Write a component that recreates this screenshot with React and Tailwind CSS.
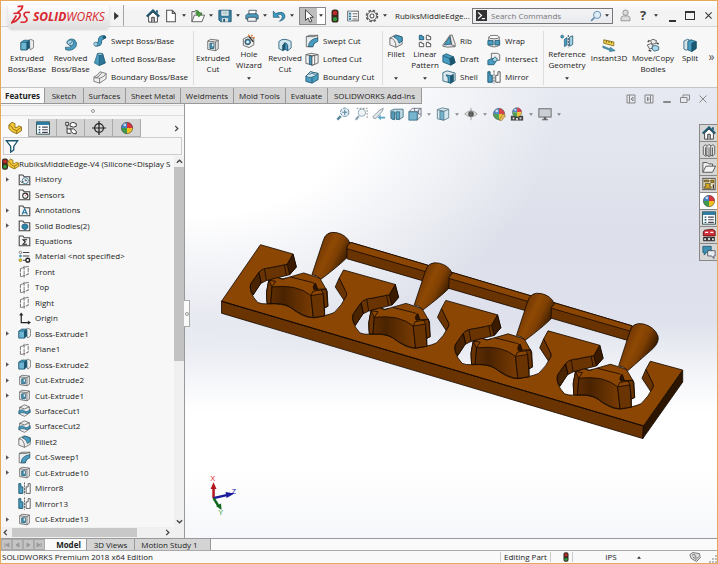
import React from "react";

const B = "#4a9cc0";
const L = "#a9d6e8";
const D = "#1c566f";
const G = "#555";

const globe = (
  <g>
    <path d="M8 8V1.5A6.5 6.5 0 0 0 1.5 8Z" fill="#3f7fc4" />
    <path d="M8 8V1.5A6.5 6.5 0 0 1 14.5 8Z" fill="#d8323a" />
    <path d="M8 8H14.5A6.5 6.5 0 0 1 8 14.500Z" fill="#f0c020" />
    <path d="M8 8H1.5A6.5 6.5 0 0 0 8 14.500Z" fill="#3f9a46" />
    <circle cx="5.500" cy="4.500" r="1.600" fill="#fff" opacity=".7" />
    <circle cx="8" cy="8" r="6.500" fill="none" stroke="#333" strokeWidth=".6" />
  </g>
);

const folder = <path d="M1.500 14.500V2.500H6L7.500 4.500H14.500V14.500Z" fill="#f4f4f4" stroke="#444" strokeWidth="1.300" />;

const art = {
  home: (
    <g>
      <path d="M3 8V15H13V8L8 3.500Z" fill="#fff" stroke="#333" />
      <path d="M.8 8.500 8 1.500 15.200 8.500" fill="none" stroke={D} strokeWidth="2.200" />
      <path d="M6.500 15V9.500H9.500V15" fill="#bbb" stroke="#333" />
      <path d="M11.500 1.500H13.500V5L11.500 3.500Z" fill={D} />
    </g>
  ),
  doc: <path d="M3 1.500H9.500L13 5V14.500H3ZM9.500 1.500V5H13" fill="#fff" stroke="#555" strokeWidth="1.200" />,
  open: (
    <g stroke="#555" strokeWidth="1">
      <path d="M1 14.500V3H5L6.500 4.500H12V7" fill="#eee" />
      <path d="M1 14.500 4 7H15.500L12.500 14.500Z" fill="#fafafa" />
      <path d="M5 1.500Q9 1 10 5H12.500L9 9 5.500 5H7.800Q7.500 3 5 1.500Z" fill="#48a83c" stroke="#26701f" strokeWidth=".7" />
    </g>
  ),
  save: (
    <g>
      <path d="M1 1.500H15V14.500H3L1 12.500Z" fill="#3c84a8" stroke={D} />
      <path d="M3.500 1.500H12.500V8H3.500Z" fill="#eef4f7" stroke={D} strokeWidth=".6" />
      <path d="M5 3.500H11M5 5.500H11" stroke="#8aa" />
      <path d="M4.500 10.500H11.500V14.500H4.500Z" fill="#ddd" />
      <path d="M6 11.500H8V14.500H6Z" fill={D} />
    </g>
  ),
  print: (
    <g stroke="#345" strokeWidth=".9">
      <path d="M4.500 6V1.500H13L12 6" fill="#fff" />
      <path d="M1 7.500 3 5.500H13.500L15 7.500V11.500H1Z" fill={B} />
      <path d="M3 11.500 4 9.500H12.500L13 14H3Z" fill="#f3f3f3" />
    </g>
  ),
  undo: <path d="M1.500 2.500V9.500H8.500L6.200 7.300Q11 4.500 11.800 8.500 12 11.500 8.500 14 15 12.500 14.800 7.800 13.500 1.500 4.200 5.200Z" fill="#3d9cc6" stroke={D} strokeWidth=".8" />,
  cursor: <path d="M4 1V13L7 10.300 9 15 11.200 14 9.200 9.500H13Z" fill="#fff" stroke="#333" strokeWidth="1" />,
  traffic: (
    <g>
      <rect x="4" y=".5" width="8" height="15" rx="3" fill="#3a2a20" />
      <circle cx="8" cy="4.500" r="2.500" fill="#c22a2a" />
      <circle cx="8" cy="11.500" r="2.500" fill="#2f9a3a" />
    </g>
  ),
  list: (
    <g>
      <rect x="1" y="1.500" width="14" height="13" fill="#fff" stroke="#333" />
      <path d="M1.500 2H6V14.500H1.500Z" fill="#b9d7e5" />
      <path d="M3 5H5M3 8.500H5M3 12H5" stroke={D} strokeWidth="1.800" />
      <path d="M7.500 5H13.500M7.500 8.500H13.500M7.500 12H13.500" stroke="#666" strokeWidth="1.300" />
    </g>
  ),
  props: (
    <g>
      <rect x=".7" y="1" width="14.600" height="14" fill="#fff" stroke="#244" />
      <path d="M1 1H15V4.500H1Z" fill="#2d7ba0" />
      <path d="M3 7H5M3 10H5M3 13H5" stroke={D} strokeWidth="1.700" />
      <path d="M7 7H13.500M7 10H13.500M7 13H13.500" stroke="#445" strokeWidth="1.200" />
    </g>
  ),
  gear: (
    <g fill="none" stroke="#555">
      <circle cx="8" cy="8" r="6.300" strokeWidth="1.800" strokeDasharray="2.900 2.050" />
      <circle cx="8" cy="8" r="5.200" strokeWidth="1" fill="#f0f0f0" />
      <circle cx="8" cy="8" r="2.200" strokeWidth="1.200" fill="#fff" />
    </g>
  ),
  prompt: (
    <g>
      <rect width="16" height="16" fill="#333" />
      <path d="M3 3.500 8 8 3 12.500M8.500 12.500H13" fill="none" stroke="#fff" strokeWidth="1.800" />
    </g>
  ),
  mag: (
    <g>
      <path d="M1.500 14.500 6 10" stroke="#5b87a8" strokeWidth="2.200" />
      <circle cx="9.500" cy="6.500" r="4.800" fill="#dcecf6" stroke="#5b87a8" strokeWidth="1.200" />
    </g>
  ),
  person: (
    <g fill="#ddd" stroke="#888">
      <circle cx="8" cy="4.500" r="3.300" />
      <path d="M2.500 14.500V11Q3 8.500 5.500 8.500H10.500Q13 8.500 13.500 11V14.500Z" />
    </g>
  ),
  extrude: (
    <g strokeWidth=".8" stroke={D}>
      <path d="M8 4 12 1.500 15.500 3V11L12 13.500Z" fill="#eee" stroke={G} />
      <path d="M1 5 4.500 2.500H10.500L8 5V13.500H1Z" fill={B} />
      <path d="M1 5H8V13.500H1Z" fill="#6cb5d3" />
      <path d="M8 5 11 3V11L8 13.500Z" fill={D} />
    </g>
  ),
  revolve: (
    <g stroke={D} strokeWidth=".8">
      <path d="M3.500 4Q7-.5 12 2 16 5.500 13.500 10 9.500 15.500 2 13.500L1.500 10.500Q6.500 11.500 9 9 5.500 9 3.500 6Z" fill={B} />
      <path d="M3.500 4Q7.500.5 10.500 3.500 12 7 9 9 5.500 9 3.500 6Z" fill={L} />
      <path d="M6 6.500Q8.500 6.500 9 4" fill="none" />
    </g>
  ),
  sweep: (
    <g>
      <path d="M3 11.500Q8 13 8 8T13 4" fill="none" stroke={D} strokeWidth="5" />
      <path d="M3 11.500Q8 13 8 8T13 4" fill="none" stroke={B} strokeWidth="3.500" />
      <circle cx="3.200" cy="11.500" r="2.300" fill={L} stroke={D} strokeWidth=".7" />
      <circle cx="13" cy="3.800" r="2" fill={D} />
    </g>
  ),
  loft: (
    <g stroke={D} strokeWidth=".7">
      <path d="M5 2 1.500 12.500 7 15.500 14 12.500 11 2Z" fill={B} />
      <path d="M5 2 7.500 3.500 7 15.500 14 12.500 11 2Z" fill="#2e7596" />
      <ellipse cx="8" cy="2.500" rx="3" ry="1.200" fill={L} />
    </g>
  ),
  boundary: (
    <g stroke="#666" strokeWidth=".9">
      <path d="M1 8Q6 6 8 2L15 4V10Q12 12 7.500 15L1 13Z" fill="#eee" />
      <path d="M1 8 7.500 9.500Q13 8 15 4M7.500 9.500V15" fill="none" />
      <path d="M3 9.500Q8 7 10 3" fill="none" />
    </g>
  ),
  boundaryCut: (
    <g stroke={D} strokeWidth=".9">
      <path d="M1 7 6 2 15 4V11L8 15 1 13Z" fill={B} />
      <path d="M1 7Q7 11 15 4L6 2Z" fill="#d8ecf4" />
      <path d="M8 8.500V15" />
      <path d="M4 5Q8 3 12 5" fill="none" />
    </g>
  ),
  cut: (
    <g strokeWidth=".9" stroke={G}>
      <path d="M2 3.500 5 1.500 14 2.500V12.500L11 14.500 2 13Z" fill="#eee" />
      <path d="M2 3.500 11 4.500 14 2.500M11 4.500V14.500" fill="none" />
      <path d="M4.500 6H9V12H4.500Z" fill={B} stroke={D} />
      <path d="M6.500 6H9V10H6.500Z" fill="#fff" stroke={D} strokeWidth=".7" />
    </g>
  ),
  hole: (
    <g strokeWidth=".9" stroke={G}>
      <path d="M1.500 5.500 7 3 13.500 5V12.500L8 15.500 1.500 13Z" fill="#eee" />
      <circle cx="6.500" cy="9" r="3.200" fill={B} stroke="#333" />
      <circle cx="6.500" cy="9" r="1.400" fill="#fff" stroke="none" />
      <path d="M8 3 13 9" stroke="#333" strokeWidth="1.600" />
      <path d="M7 1 9 2.500M12 1 10.500 3M14.500 4 12 4.500" stroke="#e8762a" strokeWidth="1.500" />
    </g>
  ),
  revolveCut: (
    <g strokeWidth=".9" stroke={D}>
      <path d="M1 4Q4 1 8 1.500T15 4V11.500L11 14.500V8.500Q8 5 5.500 8.500V14.500L1 12Z" fill="#cfe5ee" />
      <path d="M5.500 8.500Q7 5.500 8 5.500V13L5.500 14.500Z" fill={D} />
      <path d="M8 5.500Q10.500 6 11 8.500V14.500L8 13Z" fill={B} />
    </g>
  ),
  sweepCut: (
    <g strokeWidth=".9" stroke={G}>
      <path d="M1.500 3 5 1.500H14.500V5L9 13V14.500H1.500Z" fill="#e8eef0" />
      <path d="M4 14.500Q4 6 14.500 4.500V8.500Q9.500 9.500 9 14.500Z" fill={B} stroke={D} />
      <path d="M1.500 3H10L14.500 1.500" fill="none" />
    </g>
  ),
  loftCut: (
    <g strokeWidth=".9" stroke={G}>
      <path d="M1 3 7 1.500 15 3V12.500L9 15 1 13Z" fill="#f0f0f0" />
      <path d="M5 4V14L8 15V4.500Z" fill={B} stroke={D} />
      <path d="M8 4.500 11 4V14L8 15Z" fill="#fff" />
      <path d="M1 3 8 4.500 15 3" fill="none" />
    </g>
  ),
  fillet: (
    <g strokeWidth=".9" stroke={G}>
      <path d="M1 4.500 7.500 1 15 3.500V11.500L8 15.200 1 12.500Z" fill="#eee" />
      <path d="M5 3 9 1.500 15 3.500V8L11.500 10.500Q11.500 6 5 3Z" fill={B} stroke={D} />
      <path d="M1 4.500Q8 5.500 8 15" fill="none" />
    </g>
  ),
  linear: (
    <g strokeWidth="1" stroke="#444" fill="#fff">
      <path d="M1.500 1.500H4.500V3H6.500V6.500H1.500Z" fill={B} stroke={D} />
      <path d="M9.500 1.500H12.500V3H14.500V6.500H9.500ZM1.500 9.500H4.500V11H6.500V14.500H1.500ZM9.500 9.500H12.500V11H14.500V14.500H9.500Z" />
    </g>
  ),
  rib: (
    <g strokeWidth=".9" stroke={G}>
      <path d="M1 12.500 9 1.500 11.500 1 15 11V14.500L6 15 1 14Z" fill="#e6e6e6" />
      <path d="M2.500 12.500 9 3 10.500 11.500Z" fill={B} stroke={D} />
      <path d="M9 1.500 11 12.500 15 14" fill="none" />
    </g>
  ),
  draft: (
    <g strokeWidth=".9" stroke={D}>
      <path d="M1 4 5 2 13 5.500 15 12 10 15 1 11.500Z" fill={B} />
      <path d="M1 4 9 7.500 13 5.500M9 7.500 10 15" fill="none" />
      <path d="M9 7.500 13 5.500 15 12 10 15Z" fill={D} />
    </g>
  ),
  shell: (
    <g strokeWidth=".9" stroke={D}>
      <path d="M1 3 6 1 15 3.500V12L10 15 1 12.500Z" fill="#dceaf0" />
      <path d="M4.500 5.500 10 6.500V15L7 14V9Z" fill={B} />
      <path d="M10 6.500 13 5V12.500L10 15Z" fill={D} />
    </g>
  ),
  wrap: (
    <g strokeWidth=".9" stroke={G}>
      <path d="M2 3.500V13Q8 16.500 14 13V3.500Z" fill="#e8e8e8" />
      <ellipse cx="8" cy="3.500" rx="6" ry="2" fill="#fff" />
      <path d="M1 7.500H7V12.500H1ZM9 7.500H14.500V12.500H9Z" fill={B} stroke={D} />
    </g>
  ),
  intersect: (
    <g strokeWidth=".9" stroke={G}>
      <path d="M5 1.500H12L14.500 3V9.500H12L5 9Z" fill="#eee" />
      <path d="M1 9.500 5 7.500 11.500 8 8 14.500H1Z" fill={B} stroke={D} />
      <path d="M6 9 9 5.500 11.500 7.500V10L8 11.500Z" fill={L} stroke={D} />
    </g>
  ),
  mirror: (
    <g strokeWidth="1.100">
      <path d="M1 2H3.500V6H6V14H1Z" fill={B} stroke={D} />
      <path d="M8 .5V15.500" stroke="#555" strokeDasharray="2.500 1" />
      <path d="M15 2H12.500V6H10V14H15Z" fill="#fff" stroke="#555" />
    </g>
  ),
  refgeo: (
    <g>
      <circle cx="2.500" cy="3" r="1.700" fill={B} stroke={D} strokeWidth=".7" />
      <path d="M5 6 8 4V12.500L5 14.500Z" fill={B} stroke={D} strokeWidth=".7" />
      <path d="M9.500 1V15.500" stroke="#456" strokeDasharray="2.500 1" strokeWidth="1.200" />
      <path d="M11 3.500 14.500 2V12L11 14Z" fill={L} stroke={D} strokeWidth=".9" />
    </g>
  ),
  instant: (
    <g>
      <path d="M2 2 13.500 4.500V9L2 6Z" fill="#f0cf4a" stroke="#7d6414" strokeWidth=".9" />
      <path d="M5 3V5M8 3.500V5.500M11 4.500V6" stroke="#5e4a10" />
      <path d="M1 9 9.500 12.500V10.500L15 14.500 8.500 15.500 9 14 1 11Z" fill={B} stroke={D} strokeWidth=".6" />
    </g>
  ),
  move: (
    <g strokeWidth=".9" stroke="#444">
      <path d="M5 3 8 1.500 12 3 11 6.500 7 7Z" fill="#eee" />
      <path d="M1.500 8 5 6.500 8 8V11.500L4 12.500Z" fill="#eee" />
      <path d="M7 9.500 11 8.500 14.500 10V13.500L10 15 7 13Z" fill={L} stroke={D} />
      <path d="M12 5.500 14.500 7M2 4.500 4 2.500M3 14 6 15" strokeWidth="1.700" />
    </g>
  ),
  split: (
    <g strokeWidth=".9" stroke={D}>
      <path d="M1 3.500 5 1.500 7 2V12.500L3.500 14 1 12.500Z" fill="#d7e5ea" />
      <path d="M5.500 4 9 2 15 4V12L10 15.500 5.500 13.500Z" fill={B} />
      <path d="M10 6 15 4V12L10 15.500Z" fill={D} />
    </g>
  ),
  part: (
    <g stroke="#8a6a10" strokeWidth="1">
      <path d="M1 4.500 4.500 1.500 8 3V7.500Q11 8 12 5.500L15.500 7V11L10 14.500Q3 12.500 1 8.500Z" fill="#f3c83a" />
      <path d="M1 4.500 4 6Q5 10.500 10 11L15.500 7M10 11V14.500" fill="none" />
    </g>
  ),
  config: (
    <g fill="#fff" stroke="#333" strokeWidth="1.100">
      <path d="M2 1.500H5V5H2ZM3.500 5V14H8M3.500 9H8" />
      <path d="M7 3 10 1.500 14 3V6L11 7 7 6ZM8 9H11L14 12V14.500H11L8 12Z" />
    </g>
  ),
  target: (
    <g fill="none" stroke="#222" strokeWidth="1.400">
      <circle cx="8" cy="8" r="5" />
      <path d="M8 0V16M0 8H16" />
    </g>
  ),
  globe,
  filter: <path d="M1.500 2H14.500L10 8.500V12.500L6.500 15V8.500Z" fill="#fff" stroke={D} strokeWidth="1.500" />,
  history: <g>{folder}<circle cx="9" cy="9.500" r="3.800" fill="#e7f2f7" stroke="#3e6f88" /><path d="M9 7.500V9.500H11M3 10 5 12 6.500 10" fill="none" stroke="#333" /></g>,
  sensors: <g>{folder}<circle cx="9" cy="9.500" r="3.200" fill="#fff" stroke="#333" strokeWidth="1.300" /><path d="M9 9.500 11 7.500" stroke="#c33" strokeWidth="1.200" /></g>,
  annot: <g>{folder}<path d="M5 13 8.200 6 11.500 13M6.200 10.800H10.300" fill="none" stroke="#1f6f9c" strokeWidth="1.400" /></g>,
  bodies: <g>{folder}<path d="M5 7.500 8.500 6 12 7.500V11L8.500 13.500 5 11Z" fill="#2d86ab" stroke={D} /></g>,
  equations: <g>{folder}<path d="M11.200 7H6.200L9 9.700 6.200 12.500H11.200" fill="none" stroke="#222" strokeWidth="1.300" /></g>,
  material: (
    <g>
      <path d="M6 3H14M6 7.500H14M6 12.500H10" stroke="#444" strokeWidth="1.300" />
      <circle cx="3" cy="3" r="1.500" fill="#fff" stroke="#666" />
      <circle cx="3" cy="7.500" r="1.700" fill="#4b95b8" />
      <circle cx="3" cy="12.500" r="1.900" fill="#d8c520" stroke="#776" strokeWidth=".6" />
      <circle cx="12" cy="12.500" r="2.300" fill="#fff" stroke="#222" strokeWidth="1.700" />
    </g>
  ),
  plane: <path d="M3 4.500 12.500 1.500V11.500L3 14.500ZM7.500 1V15.500" fill="#fff" stroke="#666" strokeWidth="1.100" strokeDasharray="5 1" />,
  origin: (
    <g stroke="#222" strokeWidth="1.500" fill="none">
      <path d="M4 2V13H14" />
      <path d="M2 4 4 1 6 4ZM12.500 11 15.500 13 12.500 15Z" fill="#222" strokeWidth=".5" />
    </g>
  ),
  surface: (
    <g strokeWidth=".9" stroke={G}>
      <path d="M2 4 8 1 14 3.500V11L8 15.200 2 12.500Z" fill="#eee" />
      <path d="M1 8.500Q6 6 8 8.500T15 7V10.500Q11 12.500 8 11T1 12Z" fill={B} stroke={D} />
      <path d="M2 4 8 6 14 3.500" fill="none" />
    </g>
  ),
  zoomFit: (
    <g fill="none" stroke="#4c7a94">
      <path d="M1.500 14.500 5.500 10.500" strokeWidth="2.800" />
      <circle cx="10" cy="6" r="4.800" fill="#e6f1f6" strokeWidth="1.100" strokeDasharray="4 1" />
      <path d="M10 3V9M7 6H13" strokeWidth="1.300" />
    </g>
  ),
  zoomArea: (
    <g fill="none" stroke="#7d9bab">
      <path d="M2 14.500 5.500 10.500" strokeWidth="2.500" />
      <circle cx="9" cy="6.500" r="4.200" fill="#eef3f6" />
      <path d="M3 1.500H15V12.500" stroke="#777" strokeDasharray="2 1.500" />
    </g>
  ),
  prevView: (
    <g>
      <path d="M1 11 9 3.500 13 1.500 11.500 5 4.500 13Q1.500 14 1 11Z" fill="#dfe6ea" stroke="#7b8b94" />
      <path d="M15 11H10V8.500L6.500 12 10 15V13H15Z" fill={B} />
    </g>
  ),
  section: (
    <g strokeWidth=".9" stroke={D}>
      <path d="M1 4 5 2.500H15V11.500L11 14H7V7H5V14.500L1 13Z" fill="#bcd8e4" />
      <path d="M2 5.500H5V14.500L2 13.500ZM7 5.500H11V14H7Z" fill={B} />
    </g>
  ),
  orient: (
    <g strokeWidth=".9">
      <path d="M1 5.500 5 1.500H15V10.500L10.500 15V5.500Z" fill="#e8f1f5" stroke="#556" />
      <path d="M1 5.500H10.500V15H1Z" fill="#68aecb" stroke={D} />
      <path d="M10.500 5.500 15 1.500M12 3V8H15M7.500 1.500V5" fill="none" stroke="#556" />
    </g>
  ),
  display: (
    <g strokeWidth=".9" stroke="#467">
      <path d="M1.500 3 7 1 14.500 2.500V12.500L9 15 1.500 13.500Z" fill="#cfe6ef" />
      <path d="M4.500 4.200 9 5V15L4.500 14Z" fill="#64adca" />
      <path d="M1.500 3 9 5 14.500 2.500" fill="none" />
    </g>
  ),
  eye: (
    <g>
      <path d="M.8 8Q8 .5 15.200 8 8 14.500.8 8Z" fill="#ddd" stroke="#999" />
      <circle cx="8" cy="8" r="3.200" fill="#444" />
      <path d="M8 1V15" stroke="#777" strokeWidth=".8" />
    </g>
  ),
  appearance: <g>{globe}<path d="M8 15 12.500 8 15.500 10 11 15.500Z" fill="#e8b74a" stroke="#7a5a20" strokeWidth=".7" /></g>,
  scene: (
    <g>
      <path d="M1 10H15V15.500H1Z" fill="#333" />
      <path d="M3 12H5V14H3ZM7 12.500H9V15H7ZM11 12H13V14H11Z" fill="#ddd" />
      <g transform="translate(1.500 -.5) scale(.82)">{globe}</g>
    </g>
  ),
  monitor: (
    <g>
      <rect x="1" y="2" width="14" height="9.500" fill="#c8cdd2" stroke="#666" strokeWidth="1.200" />
      <path d="M6.500 11.500H9.500V14H11.500V15.200H4.500V14H6.500Z" fill="#555" />
    </g>
  ),
  books: (
    <g fill="#e6e6e6" stroke="#444" strokeWidth=".9">
      <path d="M1.500 4 4 2 6.500 3.500V13.500L4 15 1.500 13Z" />
      <path d="M5.500 4 8 1.500 10.500 3.500V14L8 15.500 5.500 14Z" />
      <path d="M10 4 12 2 14.500 3.500V12.500L12 15 10 14Z" />
      <path d="M4 5V14M8 5V15M12 5V14.500" />
    </g>
  ),
  explorer: (
    <g fill="#f4f4f4" stroke="#555" strokeWidth="1.100">
      <path d="M1 14V3H6L7.500 4.500H12V7" />
      <path d="M1 14 4.500 7H15.500L12 14Z" />
    </g>
  ),
  palette: (
    <g>
      <rect x="1" y="1.500" width="14" height="13" fill="#f4e9c0" stroke="#444" />
      <path d="M2.500 3.500H8V5.500H2.500ZM10 3.500H13.500V6.500H10Z" fill="#b98d18" stroke="#443" strokeWidth=".8" />
      <path d="M2.500 13V11H4.500V9.500H3.500V7.500H9.500V9.500H8.500V11H10.500V13Z" fill="#d9a81c" stroke="#443" strokeWidth=".8" />
      <path d="M13 8.500V13.500" stroke="#333" strokeWidth="1.500" />
    </g>
  ),
  composer: (
    <g>
      <path d="M3 2.500 12 1.500 15 3.500V9H1.500V4.500Z" fill="#d2303a" stroke="#611" />
      <path d="M3.500 5H7M9.500 5H13" stroke="#fff" strokeWidth="1.200" />
      <path d="M2 11H5V14.500H2ZM6.500 10.500H9.500V14.500H6.500ZM11 11H14V14.500H11Z" fill="#fff" stroke="#222" strokeWidth="1.200" />
    </g>
  ),
  forum: (
    <g strokeWidth=".9">
      <path d="M1 1.500H10.500V8.500H5L2.500 11.500V8.500H1Z" fill="#3f8fb0" stroke={D} />
      <path d="M6.500 6.500H15V12.500H13.500V15.500L11 12.500H6.500Z" fill="#e8eef1" stroke="#445" />
    </g>
  ),
  tag: (
    <g fill="#ddd" stroke="#555">
      <path d="M1 5 5 2 14 3.500 15 9 10 14 3 10Z" />
      <path d="M4 5.500Q8 3 8.500 7T13 8M5 8Q8 9 10 12" fill="none" />
    </g>
  ),
};

function Icon({ name, className = "size-3.5" }) {
  return (
    <svg viewBox="0 0 16 16" className={`shrink-0 ${className}`} aria-hidden="true">
      {art[name]}
    </svg>
  );
}

function Caret({ className = "" }) {
  return (
    <svg viewBox="0 0 6 4" className={`h-[3px] w-[4px] shrink-0 ${className}`} aria-hidden="true">
      <path d="M0 0H6L3 4Z" fill="#333" />
    </svg>
  );
}

function QuickMenu({ icon, label }) {
  return (
    <>
      <button aria-label={label} className="flex w-[19px] justify-center"><Icon name={icon} /></button>
      <button aria-label={`${label} options`} className="flex h-3.5 w-2 items-center justify-center"><Caret /></button>
    </>
  );
}

function Logo() {
  return (
    <div className="z-10 ml-[7px] mt-1 flex h-6 w-[101px] shrink-0 items-center self-start rounded-b-sm bg-linear-to-b from-white to-[#dedede] pl-[3px] shadow">
      <svg viewBox="0 0 20 20" className="-mt-1 size-5 shrink-0" fill="none" stroke="#d9262e" strokeWidth="1.700">
        <path d="M6.500 1.500 11.500 1.200Q11.500 4.500 6.500 7.500M2.500 8.500 8 8Q10.500 9.500 8 13 5.500 16.500.8 17.800L5.500 10.500" />
        <path d="M19 7.500Q13 6.500 13 9.500 13 11 15.500 13 17 16 14 17 12 17.500 9.500 17" />
      </svg>
      <span className="ml-0.5 text-[12px] leading-none italic text-[#d9262e]"><b>SOLID</b>WORKS</span>
    </div>
  );
}

function TitleBar() {
  return (
    <header className="flex h-[26px] shrink-0 items-center border-b border-[#d4d4d4] bg-linear-to-b from-white to-[#f3f3f3] to-40%">
      <Logo />
      <button aria-label="Show menus" className="mt-1 flex w-[14px] shrink-0 justify-center">
        <svg viewBox="0 0 6 10" className="h-2 w-[5px]"><path d="M0 0 6 5 0 10Z" fill="#333" /></svg>
      </button>
      <div className="mt-1 mr-[21px] h-[21px] w-px shrink-0 bg-[#a5a5a5]" />
      <div className="mt-1 flex shrink-0 items-center">
        <button aria-label="Home" className="flex w-4 justify-center"><Icon name="home" /></button>
        <QuickMenu icon="doc" label="New" />
        <QuickMenu icon="open" label="Open" />
        <QuickMenu icon="save" label="Save" />
        <QuickMenu icon="print" label="Print" />
        <QuickMenu icon="undo" label="Undo" />
        <div className="ml-[3px] flex h-[18px] border border-[#888]">
          <button aria-label="Select" className="flex w-[17px] items-center justify-center bg-[#bdbdbd]"><Icon name="cursor" /></button>
          <button aria-label="Select options" className="flex w-2 items-center justify-center bg-white"><Caret /></button>
        </div>
        <button aria-label="Rebuild" className="flex w-[18px] justify-center"><Icon name="traffic" className="size-3.5" /></button>
        <button aria-label="File properties" className="flex w-[18px] justify-center"><Icon name="list" className="size-3" /></button>
        <QuickMenu icon="gear" label="Options" />
      </div>
      <h1 className="mt-1 ml-1.5 flex-1 whitespace-nowrap">RubiksMiddleEdge...</h1>
      <div className="mt-1 flex h-4 w-[141px] shrink-0 items-center border border-[#777] bg-linear-to-b from-[#f4f4f6] to-[#e8eaee] px-[3px]">
        <Icon name="prompt" className="size-[11px]" />
        <input aria-label="Search Commands" placeholder="Search Commands" className="ml-1 min-w-0 flex-1 bg-transparent outline-none placeholder:text-[#777]" />
        <button aria-label="Search"><Icon name="mag" className="size-3" /></button>
        <button aria-label="Search scope" className="ml-[3px] flex h-3 items-center"><Caret /></button>
      </div>
      <div className="mt-1 flex shrink-0 items-center">
        <button aria-label="Account" className="flex w-6 justify-center"><Icon name="person" className="size-[13px]" /></button>
        <button aria-label="Help" className="w-3 text-center text-[13px] leading-none font-bold text-[#444]">?</button>
        <button aria-label="Help options" className="flex h-3 w-3.5 items-center justify-center"><Caret /></button>
        <button aria-label="Minimize" className="flex h-3 w-[18px] items-end justify-center"><span className="h-0.5 w-[7px] bg-[#333]" /></button>
        <button aria-label="Maximize" className="flex w-[18px] justify-center"><span className="h-[9px] w-2.5 border border-t-2 border-[#333]" /></button>
        <button aria-label="Close" className="flex w-[18px] justify-center">
          <svg viewBox="0 0 8 8" className="size-[7px]"><path d="M.5.5 7.500 7.500M7.500.5.5 7.500" stroke="#333" strokeWidth="1.200" /></svg>
        </button>
      </div>
    </header>
  );
}

function Big({ icon, lines, width, menu }) {
  return (
    <button className={`flex h-full shrink-0 flex-col items-center ${menu ? "pt-[7px]" : "pt-[11px]"} ${width}`}>
      <Icon name={icon} />
      <span className={`text-center leading-[11px] whitespace-nowrap ${menu ? "h-[22px]" : ""}`}>
        {lines.map((l) => <span key={l} className="block">{l}</span>)}
      </span>
      {menu && <Caret className="mt-[7px]" />}
    </button>
  );
}

function Small({ items, width }) {
  return (
    <div className={`flex shrink-0 flex-col pt-[5px] ${width}`}>
      {items.map(([icon, label]) => (
        <button key={label} className="flex h-[18px] items-center gap-1 pl-px whitespace-nowrap">
          <Icon name={icon} />
          {label}
        </button>
      ))}
    </div>
  );
}

const Divider = () => <div className="mt-1 h-[54px] w-px shrink-0 bg-[#ddd]" />;

function Ribbon() {
  return (
    <div className="flex h-[61px] shrink-0 border-b border-[#c4c4c4] bg-[#f7f7f7] pl-1">
      <Big icon="extrude" lines={["Extruded", "Boss/Base"]} width="w-[44px]" />
      <Big icon="revolve" lines={["Revolved", "Boss/Base"]} width="w-[43px]" />
      <Small width="w-[101px]" items={[["sweep", "Swept Boss/Base"], ["loft", "Lofted Boss/Base"], ["boundary", "Boundary Boss/Base"]]} />
      <Divider />
      <Big icon="cut" lines={["Extruded", "Cut"]} width="w-[38px]" />
      <Big icon="hole" lines={["Hole", "Wizard"]} width="w-[34px]" menu />
      <Big icon="revolveCut" lines={["Revolved", "Cut"]} width="w-[38px]" />
      <Small width="w-[78px]" items={[["sweepCut", "Swept Cut"], ["loftCut", "Lofted Cut"], ["boundaryCut", "Boundary Cut"]]} />
      <Divider />
      <Big icon="fillet" lines={["Fillet"]} width="w-[26px]" menu />
      <Big icon="linear" lines={["Linear", "Pattern"]} width="w-[32px]" menu />
      <Small width="w-[45px]" items={[["rib", "Rib"], ["draft", "Draft"], ["shell", "Shell"]]} />
      <Small width="w-[57px]" items={[["wrap", "Wrap"], ["intersect", "Intersect"], ["mirror", "Mirror"]]} />
      <Divider />
      <Big icon="refgeo" lines={["Reference", "Geometry"]} width="w-[46px]" menu />
      <Big icon="instant" lines={["Instant3D"]} width="w-[38px]" />
      <Big icon="move" lines={["Move/Copy", "Bodies"]} width="w-[50px]" />
      <Big icon="split" lines={["Split"]} width="w-[24px]" />
      <button aria-label="More commands" className="flex-1 pl-1 text-center text-xs text-[#555]">»</button>
    </div>
  );
}

const commandTabs = [
  ["Features", "w-[44px]"],
  ["Sketch", "w-[39px]"],
  ["Surfaces", "w-[42px]"],
  ["Sheet Metal", "w-[55px]"],
  ["Weldments", "w-[53px]"],
  ["Mold Tools", "w-[52px]"],
  ["Evaluate", "w-[42px]"],
  ["SOLIDWORKS Add-Ins", "w-[94px]"],
];

function CommandTabs() {
  return (
    <div className="flex h-4 shrink-0 justify-between">
      <div role="tablist" aria-label="Command manager" className="flex border-b border-[#999]">
        {commandTabs.map(([t, w], i) => (
          <button
            key={t}
            role="tab"
            aria-selected={i === 0}
            className={`h-full shrink-0 border-r border-[#999] whitespace-nowrap ${w} ${i === 0 ? "bg-[#fafafa] font-bold" : "bg-[#d4d4d4]"}`}
          >
            {t}
          </button>
        ))}
      </div>
      <div className="flex items-end gap-2 pr-[9px] text-[#888]">
        {[
          ["Collapse left pane", "M1 1H9V9H1ZM3.500 1V9M7 3 5 5 7 7Z"],
          ["Collapse right pane", "M1 1H9V9H1ZM6.500 1V9M3.500 3 5.500 5 3.500 7Z"],
          ["Minimize document", "M1.500 7.500H8.500V8.500H1.500Z"],
          ["Restore document", "M3 3V1H9.500V6H7M.5 3.500H7V8.500H.5Z"],
          ["Close document", "M1.500 1.500 8.500 8.500M8.500 1.500 1.500 8.500"],
        ].map(([label, d]) => (
          <button key={label} aria-label={label}>
            <svg viewBox="0 0 10 10" className="size-2.5" fill="none" stroke="currentColor"><path d={d} /></svg>
          </button>
        ))}
      </div>
    </div>
  );
}

const tree = [
  ["history", "History", 1],
  ["sensors", "Sensors", 0],
  ["annot", "Annotations", 1],
  ["bodies", "Solid Bodies(2)", 1],
  ["equations", "Equations", 0],
  ["material", "Material <not specified>", 0],
  ["plane", "Front", 0],
  ["plane", "Top", 0],
  ["plane", "Right", 0],
  ["origin", "Origin", 0],
  ["extrude", "Boss-Extrude1", 1],
  ["plane", "Plane1", 0],
  ["extrude", "Boss-Extrude2", 1],
  ["cut", "Cut-Extrude2", 1],
  ["cut", "Cut-Extrude1", 1],
  ["surface", "SurfaceCut1", 0],
  ["surface", "SurfaceCut2", 0],
  ["fillet", "Fillet2", 0],
  ["sweepCut", "Cut-Sweep1", 1],
  ["cut", "Cut-Extrude10", 1],
  ["mirror", "Mirror8", 0],
  ["mirror", "Mirror13", 0],
  ["cut", "Cut-Extrude13", 1],
];

function Chevron({ dir }) {
  const d = { up: "M1 5.500 4 2.500 7 5.500", down: "M1 2.500 4 5.500 7 2.500", left: "M5.500 1 2.500 4 5.500 7", right: "M2.500 1 5.500 4 2.500 7" }[dir];
  return <svg viewBox="0 0 8 8" className="size-[7px] shrink-0" fill="none" stroke="#444" strokeWidth="1.500"><path d={d} /></svg>;
}

function FeaturePanel() {
  return (
    <aside className="flex w-[184px] shrink-0 flex-col border-r border-[#999] bg-[#f7f7f7]">
      <div className="mt-px flex h-[11px] shrink-0 items-center justify-center border-y border-[#ddd]">
        <span className="size-1 rounded-full border border-[#999]" />
      </div>
      <div className="mt-[3px] flex h-[18px] shrink-0">
        <div role="tablist" aria-label="Manager" className="flex">
          {["part", "props", "config", "target", "globe"].map((n, i) => (
            <button
              key={n}
              role="tab"
              aria-label={n}
              aria-selected={i === 0}
              className={`flex w-7 items-center justify-center border-r border-[#aaa] ${i === 0 ? "bg-[#fafafa]" : "border-b bg-[#d4d4d4]"}`}
            >
              <Icon name={n} />
            </button>
          ))}
        </div>
        <button aria-label="More manager tabs" className="ml-auto pr-1"><Chevron dir="right" /></button>
      </div>
      <div className="mx-0.5 flex h-[18px] shrink-0 items-center border border-[#ccc] pl-px">
        <Icon name="filter" className="size-3.5" />
        <input aria-label="Filter tree" className="min-w-0 flex-1 bg-transparent outline-none" />
      </div>
      <div className="flex min-h-0 flex-1 pt-px">
        <ul className="flex min-w-0 flex-1 flex-col">
          <li className="flex flex-1 items-center whitespace-nowrap">
            <Icon name="traffic" className="-mr-1 -ml-0.5 size-3" />
            <Icon name="part" className="size-3" />
            <span>RubiksMiddleEdge-V4 (Silicone&lt;Display S</span>
          </li>
          {tree.map(([icon, label, open]) => (
            <li key={label} className="flex flex-1 items-center whitespace-nowrap">
              <span className="flex w-[17px] shrink-0 pl-[5px]">
                {open ? <svg viewBox="0 0 4 6" className="h-[5px] w-[3px]"><path d="M0 0 4 3 0 6Z" fill="#555" /></svg> : null}
              </span>
              <Icon name={icon} className="size-[13px]" />
              <span className="ml-1">{label}</span>
            </li>
          ))}
        </ul>
        <div className="flex w-[10px] shrink-0 flex-col items-center bg-[#f0f0f0] py-0.5">
          <Chevron dir="up" />
          <div className="mt-0.5 h-[194px] w-full bg-[#c2c2c2]" />
          <div className="mt-auto"><Chevron dir="down" /></div>
        </div>
      </div>
      <div className="flex h-[11px] shrink-0 items-center bg-[#f0f0f0] pl-px">
        <Chevron dir="left" />
        <div className="ml-[3px] h-[9px] w-[125px] bg-[#c8c8c8]" />
        <div className="ml-auto pr-[13px]"><Chevron dir="right" /></div>
      </div>
    </aside>
  );
}

const TOP = "#8b4603";
const SIDE = "#6a3302";
const pitch = (k) => `translate(${k * 307.5} ${k * 91.5})`;

function plateTop() {
  let d = "M33 230 150 60";
  for (let k = 0; k < 4; k++) {
    const p = (x, y) => `${x + k * 307.5} ${y + k * 91.5}`;
    d += `L${p(248, 88)} ${p(230, 119)} ${p(180, 129)}Q${p(154, 131)} ${p(145, 143)}L${p(121, 177)}`;
    d += `Q${p(116, 186)} ${p(122, 203)}T${p(142, 234)}Q${p(152, 239)} ${p(175, 238)}`;
    d += `Q${p(215, 235)} ${p(240, 248)}Q${p(275, 277)} ${p(300, 279)}Q${p(345, 276)} ${p(372, 264)}`;
    d += `Q${p(395, 243)} ${p(409, 213)}L${p(409, 205)} ${p(387, 160)} ${p(400, 136)}`;
  }
  return `${d}L1420 437 1302 605Z`;
}

function Model() {
  return (
    <svg viewBox="185 124 514 415" className="min-h-0 min-w-0 flex-1" role="img" aria-label="Rubiks middle edge part">
      <defs>
        <linearGradient id="cone" gradientUnits="userSpaceOnUse" x1="318" y1="80" x2="405" y2="122">
          <stop offset="0" stopColor="#6f3602" />
          <stop offset=".35" stopColor="#8f4904" />
          <stop offset=".6" stopColor="#7f4003" />
          <stop offset="1" stopColor="#301700" />
        </linearGradient>
        <linearGradient id="inner" x1="0" x2="1">
          <stop offset="0" stopColor="#5e2d01" />
          <stop offset=".3" stopColor="#4a2301" />
          <stop offset="1" stopColor="#7a3c03" />
        </linearGradient>
      </defs>
      <g transform="translate(210 225) scale(.3333)" stroke="#160a00" strokeWidth="2.500" strokeLinejoin="round">
        {[0, 1, 2, 3].map((k) => (
          <g key={k} transform={pitch(k)}>
            <path d="M248 88 258 127 238 150 168 168 150 177 128 211 119 195 121 177 145 143Q154 131 180 129L230 119Z" fill={SIDE} />
            <path d="M121 177 145 143 152 175 128 211 119 195Z" fill="#4a2301" />
            <path d="M248 88 258 127 238 150 230 119Z" fill="#3a1b00" />
            <path d="M222 121 228 152M162 131 168 168M145 143 152 175" />
            <path d="M387 160 375 187 402 228 409 213 409 205Z" fill={SIDE} />
          </g>
        ))}
        <path d="M33 230V266L1300 643 1302 605Z" fill={SIDE} />
        <path d="M1302 605 1420 437V473L1300 643Z" fill="#2b1400" />
        <path d={plateTop()} fill={TOP} />
        <path d="M33 230 1302 605" />
        {[0, 1, 2, 3].map((k) => (
          <g key={k} transform={pitch(k)}>
            <path d="M175 167 200 159 218 163 280 145 328 160 351 200 353 245 343 250 343 274 310 280Q278 277 240 248 220 235 170 237 164 205 175 167Z" fill={TOP} />
            <path d="M175 167 185 187 181 237 170 237Q164 205 175 167Z" fill={SIDE} />
            <path d="M185 187Q260 178 302 213L309 279Q278 277 240 248 220 235 181 237Z" fill="url(#inner)" />
            <path d="M302 213 339 207 343 274 309 279Z" fill={SIDE} />
            <path d="M339 207 333 196 348 193 353 245 343 250Z" fill={SIDE} />
            <path d="M175 167 196 170 185 187M302 213 308 200 333 196M240 157 300 172Q318 176 316 184L322 194 348 193" fill="none" />
            <path d="M316 176Q304 186 312 196L322 194Z" fill="#2b1400" />
            <path d="M205 159Q215 168 228 160" fill="none" />
          </g>
        ))}
        <path d="M410 55 425 54 1268 304 1262 350 410 102Z" fill={SIDE} />
        <path d="M410 55 425 54 1268 304 1262 320 410 72Z" fill={TOP} />
        {[0, 1, 2, 3].map((k) => (
          <g key={k} transform={pitch(k)}>
            <path
              d={k < 3
                ? "M305 150 338 50Q346 17 380 24 410 31 419 55L410 66 409 100Q385 124 332 164 318 150 305 150Z"
                : "M305 150 338 48Q346 17 380 24 413 33 423 60 428 78 408 98L333 164Q318 150 305 150Z"}
              fill="url(#cone)"
            />
          </g>
        ))}
      </g>
      <g strokeWidth="2.500" fill="none">
        <path d="M213 499V488" stroke="#b3161c" />
        <path d="M210 490 213 483 216 490Z" fill="#b3161c" />
        <path d="M213 499 226 496" stroke="#1a1a9c" />
        <path d="M225 493 234 494.500 226 499Z" fill="#1a1a9c" />
        <path d="M213 499 218 507" stroke="#11661c" />
        <path d="M215.500 507 220.500 504.500 221 511Z" fill="#11661c" />
      </g>
      <g fontSize="8">
        <text x="210" y="482" fill="#e02020">X</text>
        <text x="231" y="495" fill="#1a1a9c">Z</text>
        <text x="218" y="516" fill="#2a9a3a">Y</text>
      </g>
    </svg>
  );
}

const views = [
  ["zoomFit", "Zoom to fit", 0],
  ["zoomArea", "Zoom to area", 0],
  ["prevView", "Previous view", 0],
  ["section", "Section view", 0],
  ["orient", "View orientation", 1],
  ["display", "Display style", 1],
  ["eye", "Hide/show items", 1],
  ["appearance", "Edit appearance", 0],
  ["scene", "Apply scene", 1],
  ["monitor", "View settings", 1],
];

function Viewport() {
  return (
    <main className="relative flex min-w-0 flex-1 flex-col">
      <div className="flex h-5 shrink-0 items-center justify-center pr-1 opacity-90">
        {views.map(([icon, label, menu]) => (
          <React.Fragment key={icon}>
            <button aria-label={label} className="flex w-[18px] justify-center"><Icon name={icon} className="size-3.5" /></button>
            {menu ? <button aria-label={`${label} options`} className="flex h-3 w-2.5 items-center justify-center opacity-60"><Caret /></button> : null}
          </React.Fragment>
        ))}
      </div>
      <div className="flex min-h-0 flex-1">
        <Model />
        <nav aria-label="Task pane" className="flex w-[18px] shrink-0 flex-col self-start border-t border-l border-[#888]">
          {["home", "books", "explorer", "palette", "globe", "props", "composer", "forum"].map((n) => (
            <button
              key={n}
              aria-label={n}
              className={`flex h-[17px] items-center justify-center border-b border-[#888] ${n === "globe" ? "bg-white" : "bg-[#d6d6d6]"}`}
            >
              <Icon name={n} />
            </button>
          ))}
        </nav>
      </div>
      <button aria-label="Collapse panel" className="absolute top-[196px] -left-px flex h-[27px] w-1.5 items-center justify-center border border-l-0 border-[#aaa] bg-[#fafafa]">
        <span className="size-1 rounded-full border border-[#999]" />
      </button>
    </main>
  );
}

function BottomTabs() {
  return (
    <div className="flex h-3 shrink-0 border-t border-[#999] bg-[#fafafa]">
      {["M3 2V6M7 2 4 4 7 6Z", "M6 2 3 4 6 6Z", "M3 2 6 4 3 6Z", "M2 2 5 4 2 6ZM6 2V6"].map((d, i) => (
        <button key={d} aria-label={["First", "Previous", "Next", "Last"][i]} className="flex w-[11px] shrink-0 items-center justify-center border border-[#aaa] bg-[#c4c4c4]">
          <svg viewBox="0 0 9 8" className="h-2 w-[9px]" fill="#999" stroke="#999"><path d={d} /></svg>
        </button>
      ))}
      <div role="tablist" aria-label="Studies" className="flex">
        <button role="tab" aria-selected="true" className="w-[42px] border-r border-[#999] bg-[#fafafa] pl-1.5 leading-[11px] font-bold">Model</button>
        <button role="tab" aria-selected="false" className="w-[48px] border-r border-[#999] bg-[#d4d4d4] leading-[11px]">3D Views</button>
        <button role="tab" aria-selected="false" className="w-[76px] border-r border-[#999] bg-[#d4d4d4] pr-1.5 leading-[11px]">Motion Study 1</button>
      </div>
    </div>
  );
}

function StatusBar() {
  return (
    <footer className="flex h-[13px] shrink-0 items-center border-t border-[#aaa] bg-[#f9f9f9]">
      <p className="flex-1 pl-px whitespace-nowrap">SOLIDWORKS Premium 2018 x64 Edition</p>
      <p className="w-[51px] border-x border-[#ccc] text-center whitespace-nowrap">Editing Part</p>
      <div className="flex w-[22px] justify-center border-r border-[#ccc] pl-2"><Icon name="traffic" className="size-2.5" /></div>
      <button className="ml-3 w-[52px] text-center">IPS</button>
      <Caret className="rotate-180" />
      <button aria-label="Tags" className="ml-12"><Icon name="tag" className="size-3" /></button>
      <svg viewBox="0 0 8 8" className="ml-2 size-2 self-end"><path d="M6 0H8V2H6ZM3 3H5V5H3ZM6 3H8V5H6ZM0 6H2V8H0ZM3 6H5V8H3ZM6 6H8V8H6Z" fill="#bbb" /></svg>
    </footer>
  );
}

export default function App() {
  return (
    <div className="flex h-screen flex-col overflow-hidden border border-[#e6a95c] bg-[#f7f7f7] font-['Open_Sans','Noto_Sans',sans-serif] text-[8px] leading-[10px] text-[#222]">
      <TitleBar />
      <Ribbon />
      <div className="flex min-h-0 flex-1 flex-col bg-[radial-gradient(ellipse_50%_58%_at_28%_2%,#fff_45%,transparent_100%),linear-gradient(to_bottom,#e6e9f1_0%,#dde0ea_32%,#dfe2ec_52%,#f4f5f9_64%,#fff_72%,#fff_85%,#f6f7fa_100%)]">
        <CommandTabs />
        <div className="flex min-h-0 flex-1">
          <FeaturePanel />
          <Viewport />
        </div>
      </div>
      <BottomTabs />
      <StatusBar />
    </div>
  );
}
